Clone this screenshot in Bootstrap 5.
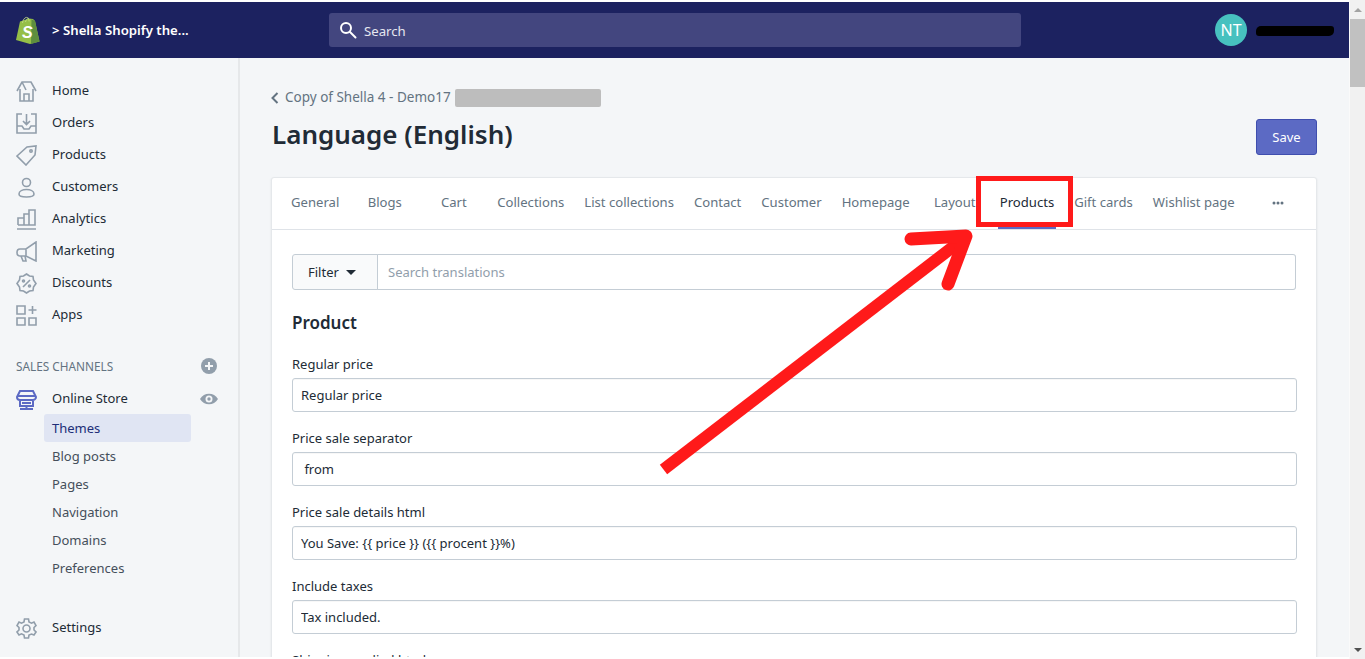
<!DOCTYPE html>
<html lang="en">

<head>
  <meta charset="UTF-8">
  <meta name="viewport" content="width=device-width, initial-scale=1.0">
  <title>Language (English)</title>
  <link href="https://cdn.jsdelivr.net/npm/bootstrap@5.3.0/dist/css/bootstrap.min.css" rel="stylesheet">
  <style>
    html, body { height: 100%; }
    body {
      font-family: "Noto Sans", "Liberation Sans", sans-serif;
      font-size: 13px;
      background: #fff;
      color: #212b36;
      overflow: hidden;
      padding: 2px 0;
    }
    .page-col { width: 1349px; height: 655px; overflow: hidden; flex: none; background: #f4f6f8; }

    /* top bar */
    .topbar { height: 56px; background: #1c2260; color: #fff; flex: none; }
    .shop-brand { width: 329px; padding-left: 14px; }
    .shop-name { font-weight: 600; font-size: 13.2px; margin-left: 12px; padding-top: 1px; }
    .top-search { width: 692px; height: 34px; background: #43467f; border-radius: 3px; padding-left: 10px; }
    .top-search span { margin-left: 7px; color: #e6e7f0; font-size: 13.2px; padding-top: 3px; }
    .user-box { margin-left: auto; padding-right: 15px; }
    .avatar { width: 32px; height: 32px; border-radius: 50%; background: #47c1bf; color: #fff; font-size: 16px; }
    .scribble { width: 78px; height: 10px; background: #000; border-radius: 5px 3px 5px 3px; margin-left: 9px; margin-top: 2px; }

    /* sidebar */
    .side-col { width: 240px; flex: none; border-right: 2px solid #e6e8ea; height: 599px; padding-top: 16px; }
    .side-link { height: 32px; padding-left: 16px; padding-top: 2px; color: #212b36; text-decoration: none; }
    .side-link svg { width: 21px; height: 21px; margin-right: 15px; flex: none; }
    .side-head { height: 20px; padding: 0 21px 0 16px; margin-top: 26px; margin-bottom: 6px; color: #637381; font-size: 11.8px; }
    .side-head span { padding-top: 2px; }
    .side-sub { display: block; height: 28px; line-height: 28px; margin-left: 44px; width: 147px; padding-left: 8px; color: #454f5b; text-decoration: none; border-radius: 3px; }
    .side-sub.current { background: #e0e5f3; color: #202e78; }
    .side-settings { margin-top: 29px; }
    .eye-btn { margin-left: auto; margin-right: 20px; }
    .eye-btn svg { margin: 0; width: 18px; height: 18px; }

    /* main */
    .main-col { flex: 1; padding: 0 32px 0 31px; min-width: 0; }
    .back-line { height: 24px; margin-top: 27px; color: #637381; font-size: 13.5px; padding-top: 1px; }
    .back-line svg { margin: 0 6px 0 0; }
    .gray-blot { width: 146px; height: 18px; background: #bdbdbd; margin-left: 4px; border-radius: 2px; }
    .title-line { margin-top: 8px; height: 44px; padding-left: 1px; }
    .page-title { font-size: 26px; font-weight: 600; margin: 0; line-height: 34px; color: #212b36; }
    .save-btn { width: 61px; height: 36px; background: #5c6ac4; border: 1px solid #3f4eae; color: #fff; font-size: 13px; padding: 1px 0 0; border-radius: 3px; margin-top: 2px; }
    .panel { margin-top: 16px; border: 1px solid #e5e8eb; border-radius: 3px; box-shadow: 0 1px 2px rgba(63,63,68,.12); width: 1046px; }
    .tab-bar { height: 52px; padding-left: 9px; border-bottom: 1px solid #dfe3e8; flex-wrap: nowrap; }
    .tab-bar .nav-link { height: 51px; line-height: 48px; padding: 0 10px; color: #637381; font-size: 13.1px; text-align: center; white-space: nowrap; border-bottom: 3px solid transparent; }
    .tab-bar .nav-link.active { color: #212b36; position: relative; }
    .tab-bar .nav-link.active::after { content: ""; position: absolute; left: 8px; right: 8px; bottom: -3px; height: 3px; background: #5c6ac4; }
    .tab-bar .tab-blogs { min-width: 71px; }
    .tab-bar .tab-cart { min-width: 67px; }
    .tab-bar .tab-layout { min-width: 70px; }
    .tab-bar .tab-more { min-width: 66px; }
    .panel-body { padding: 24px 20px 0 20px; }
    .filter-group { height: 36px; width: 1004px; }
    .filter-group .btn { width: 86px; font-size: 13px; padding: 1px 0 0 15px; text-align: left; color: #212b36; background: #f9fafb; border: 1px solid #c4cdd5; border-radius: 3px 0 0 3px; }
    .filter-group .form-control { border: 1px solid #c4cdd5; border-left: 0; font-size: 13px; border-radius: 0 3px 3px 0; padding: 1px 0 0 11px; color: #212b36; }
    .filter-group .form-control::placeholder { color: #919eab; }
    .caret-down { display: inline-block; border-left: 5px solid transparent; border-right: 5px solid transparent; border-top: 5px solid #212b36; margin-left: 7px; vertical-align: 2px; }
    .section-title { font-size: 17px; font-weight: 600; margin: 21px 0 0; line-height: 24px; }
    .field-label { display: block; margin: 0; height: 25px; line-height: 22px; color: #212b36; }
    .first-field { margin-top: 18px; }
    .field-box { height: 34px; width: 1005px; font-size: 13px; border: 1px solid #c4cdd5; border-radius: 3px; padding: 0 8px; color: #212b36; margin-bottom: 15px; box-shadow: inset 0 1px 0 rgba(0,0,0,.03); }

    /* scrollbar */
    .scroll-track { width: 16px; height: 659px; margin-top: -2px; background: #f1f1f1; border-left: 1px solid #fafafa; flex: none; }
    .scroll-thumb { height: 68px; background: #c1c1c1; }
    .scroll-arrow { height: 19px; }
    .arrow-up { border-left: 4px solid transparent; border-right: 4px solid transparent; border-bottom: 4px solid #a3a3a3; }
    .arrow-down { border-left: 4px solid transparent; border-right: 4px solid transparent; border-top: 4px solid #505050; }

    /* annotation drawn over the screenshot */
    .mark-layer { position: absolute; left: 0; top: 0; width: 1365px; height: 659px; pointer-events: none; }
  </style>
</head>

<body class="d-flex position-relative">
  <div class="page-col d-flex flex-column">
    <header class="topbar d-flex align-items-center">
      <div class="shop-brand d-flex align-items-center">
        <svg width="26" height="30" viewBox="0 0 26 30">
          <path d="M2 25 6 6.500 15 3.500 19 4 21 6 25.500 26.500 16 29Z" fill="#95bf47" />
          <path d="M17.500 4.200 21 6 25.500 26.500 17 29Z" fill="#5e8e3e" />
          <path d="M8.500 8c.4-3 2-5.600 4-5.600 2 0 2.600 2 2.600 4M11.500 7c.5-2 1.500-3.500 3.300-3.800" fill="none" stroke="#c6e08c" stroke-width=".8" />
          <text x="8" y="23" font-family="Liberation Sans" font-weight="700" font-style="italic" font-size="16" fill="#fff">S</text>
        </svg>
        <span class="shop-name">&gt; Shella Shopify the...</span>
      </div>
      <div class="top-search d-flex align-items-center">
        <svg width="18" height="18" viewBox="0 0 18 18" fill="none" stroke="#fff" stroke-width="2"><circle cx="7" cy="7" r="5" /><path d="m11 11 5.500 5.500" stroke-linecap="round" /></svg>
        <span>Search</span>
      </div>
      <div class="user-box d-flex align-items-center">
        <div class="avatar d-flex align-items-center justify-content-center">NT</div>
        <div class="scribble"></div>
      </div>
    </header>

    <div class="d-flex flex-grow-1">
      <nav class="side-col d-flex flex-column">
        <a class="side-link d-flex align-items-center" href="#">
          <svg viewBox="0 0 21 21" fill="none" stroke="#919eab" stroke-width="1.600"><path d="M1 10 6 1h9l5 9M4 8v12h13V8M8 20v-7h5v7M6 1l4 8" /></svg>Home</a>
        <a class="side-link d-flex align-items-center" href="#">
          <svg viewBox="0 0 21 21" fill="none" stroke="#919eab" stroke-width="1.600"><path d="M6 1H1v19h19V1h-5M1 13h5l2 3h5l2-3h5M10.500 1v10M7 8l3.500 3.500L14 8" /></svg>Orders</a>
        <a class="side-link d-flex align-items-center" href="#">
          <svg viewBox="0 0 21 21" fill="none" stroke="#919eab" stroke-width="1.600"><path d="M1 11 11 2l9-1-1 9-9 10Z" /><circle cx="15" cy="6" r="1.200" /></svg>Products</a>
        <a class="side-link d-flex align-items-center" href="#">
          <svg viewBox="0 0 21 21" fill="none" stroke="#919eab" stroke-width="1.600"><circle cx="10.500" cy="5.500" r="4" /><path d="M3 17c0-6 15-6 15 0 0 2-2 3-7.500 3S3 19 3 17Z" /></svg>Customers</a>
        <a class="side-link d-flex align-items-center" href="#">
          <svg viewBox="0 0 21 21" fill="none" stroke="#919eab" stroke-width="1.600"><path d="M2 16V9h6v7M8 16V5h5v11M13 16V1h6v15H2M1 20h19" /></svg>Analytics</a>
        <a class="side-link d-flex align-items-center" href="#">
          <svg viewBox="0 0 21 21" fill="none" stroke="#919eab" stroke-width="1.600"><path d="M20 1v19L10 15H4c-4 0-4-7 0-7h6ZM10 8v7M5 15l2 5h3l-1-5" /></svg>Marketing</a>
        <a class="side-link d-flex align-items-center" href="#">
          <svg viewBox="0 0 21 21" fill="none" stroke="#919eab" stroke-width="1.600"><path d="m10.500 1 3 2 3.500.5.500 3.500 2.500 3.500-2.500 3.500-.5 3.500-3.500.5-3 2-3-2-3.500-.5L3.500 14 1 10.500 3.500 7 4 3.500 7.500 3ZM7 14l7-7" /><circle cx="7.500" cy="8" r="1" /><circle cx="13.500" cy="13" r="1" /></svg>Discounts</a>
        <a class="side-link d-flex align-items-center" href="#">
          <svg viewBox="0 0 21 21" fill="none" stroke="#919eab" stroke-width="1.600"><path d="M1 1h8v8H1ZM1 13h8v7H1ZM13 13h7v7h-7ZM16.500 1v8M12.500 5h8" /></svg>Apps</a>

        <div class="side-head d-flex align-items-center justify-content-between">
          <span>SALES CHANNELS</span>
          <svg width="16" height="16" viewBox="0 0 16 16"><circle cx="8" cy="8" r="8" fill="#919eab" /><path d="M8 4v8M4 8h8" stroke="#f4f6f8" stroke-width="2" /></svg>
        </div>
        <a class="side-link d-flex align-items-center" href="#">
          <svg viewBox="0 0 21 21" fill="none" stroke="#5c6ac4" stroke-width="2"><path d="M4 2h13l3 6c0 2-2 3-3 3H4C2 11 1 10 1 8ZM1 7h19M4 11v6h13v-6M6 14h9M4 20h13M10.500 17v3" /></svg>Online Store
          <span class="eye-btn d-flex"><svg viewBox="0 0 18 18"><path d="M0 9c4-7 14-7 18 0-4 7-14 7-18 0Z" fill="#919eab" /><circle cx="9" cy="9" r="3.500" fill="#f4f6f8" /><circle cx="9" cy="9" r="1.700" fill="#919eab" /></svg></span>
        </a>
        <a class="side-sub current" href="#">Themes</a>
        <a class="side-sub" href="#">Blog posts</a>
        <a class="side-sub" href="#">Pages</a>
        <a class="side-sub" href="#">Navigation</a>
        <a class="side-sub" href="#">Domains</a>
        <a class="side-sub" href="#">Preferences</a>
        <a class="side-link side-settings d-flex align-items-center" href="#">
          <svg viewBox="0 0 21 21" fill="none" stroke="#919eab" stroke-width="1.600"><path d="M8.500 1h4l.5 3 2.500 1.200L18 4l2 3.500-2 2v2.500l2 2-2 3-2.500-1L13 17l-.5 3h-4L8 17l-2.500-1.200L3 17l-2-3 2-2V9.500l-2-2L3 4l2.500 1.200L8 4Z" /><circle cx="10.500" cy="10.500" r="3.500" /></svg>Settings</a>
      </nav>

      <main class="main-col">
        <div class="back-line d-flex align-items-center">
          <svg width="8" height="12" viewBox="0 0 8 12" fill="none" stroke="#637381" stroke-width="2"><path d="M6.500 1 1.500 6l5 5" /></svg>
          <span>Copy of Shella 4 - Demo17</span>
          <div class="gray-blot"></div>
        </div>
        <div class="title-line d-flex justify-content-between">
          <h1 class="page-title">Language (English)</h1>
          <button class="btn save-btn" type="button">Save</button>
        </div>

        <section class="card panel">
          <nav class="nav tab-bar">
            <a class="nav-link" href="#">General</a>
            <a class="nav-link tab-blogs" href="#">Blogs</a>
            <a class="nav-link tab-cart" href="#">Cart</a>
            <a class="nav-link" href="#">Collections</a>
            <a class="nav-link" href="#">List collections</a>
            <a class="nav-link" href="#">Contact</a>
            <a class="nav-link" href="#">Customer</a>
            <a class="nav-link" href="#">Homepage</a>
            <a class="nav-link tab-layout" href="#">Layout</a>
            <a class="nav-link active" href="#">Products</a>
            <a class="nav-link" href="#">Gift cards</a>
            <a class="nav-link" href="#">Wishlist page</a>
            <a class="nav-link tab-more" href="#"><svg width="12" height="4" viewBox="0 0 12 4" fill="#637381"><circle cx="2" cy="2" r="1.500" /><circle cx="6" cy="2" r="1.500" /><circle cx="10" cy="2" r="1.500" /></svg></a>
          </nav>
          <div class="panel-body">
            <div class="input-group filter-group">
              <button class="btn" type="button">Filter<span class="caret-down"></span></button>
              <input class="form-control" type="text" placeholder="Search translations">
            </div>
            <h2 class="section-title">Product</h2>
            <label class="field-label first-field">Regular price</label>
            <input class="form-control field-box" type="text" value="Regular price">
            <label class="field-label">Price sale separator</label>
            <input class="form-control field-box" type="text" value=" from">
            <label class="field-label">Price sale details html</label>
            <input class="form-control field-box" type="text" value="You Save: {{ price }} ({{ procent }}%)">
            <label class="field-label">Include taxes</label>
            <input class="form-control field-box" type="text" value="Tax included.">
            <label class="field-label">Shipping applied html</label>
          </div>
        </section>
      </main>
    </div>
  </div>

  <div class="scroll-track d-flex flex-column">
    <div class="scroll-arrow d-flex justify-content-center align-items-center"><div class="arrow-up"></div></div>
    <div class="scroll-thumb"></div>
    <div class="flex-grow-1"></div>
    <div class="scroll-arrow d-flex justify-content-center align-items-center"><div class="arrow-down"></div></div>
  </div>

  <svg class="mark-layer" viewBox="0 0 1365 659" fill="none" stroke="#ff1a1a">
    <rect x="978.500" y="178.500" width="92" height="46" stroke-width="5" />
    <path d="M663.500 469.500 958 243" stroke-width="12" />
    <path d="M911 239 966 236 948 284" stroke-width="13" stroke-linecap="round" stroke-linejoin="round" />
  </svg>

  <script src="https://cdn.jsdelivr.net/npm/bootstrap@5.3.0/dist/js/bootstrap.bundle.min.js"></script>
</body>

</html>
